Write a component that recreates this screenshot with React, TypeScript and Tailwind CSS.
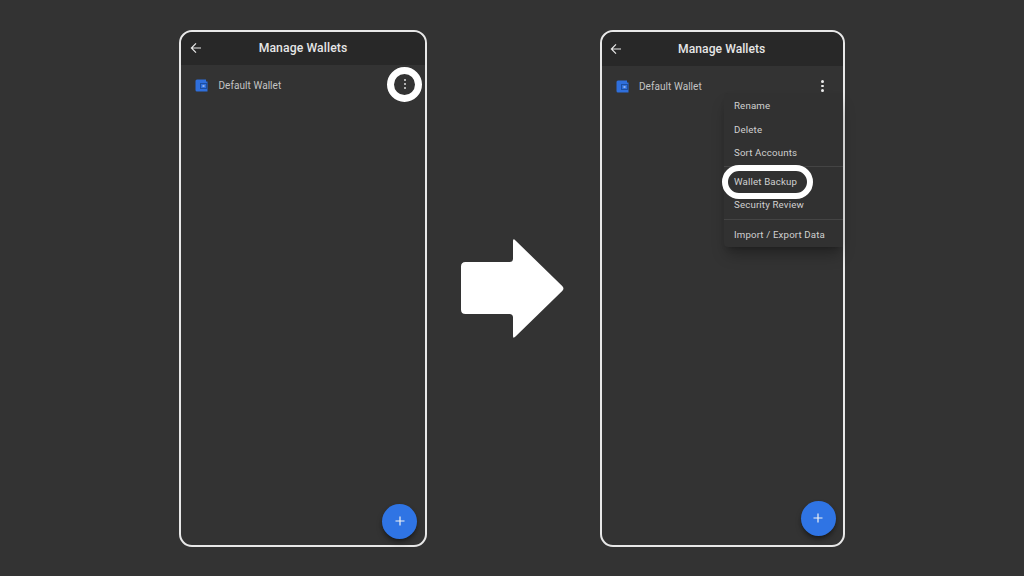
import React from "react";

const font = { fontFamily: "Roboto, sans-serif" };

const BackArrow = () => (
  <svg width="12" height="12" viewBox="0 0 12 12" fill="none" stroke="#e8e8e8" strokeWidth="1.2">
    <path d="M11 6H1.5M6 1.4 1.4 6 6 10.6" />
  </svg>
);

const WalletIcon = () => (
  <svg width="13" height="13" viewBox="0 0 13 13">
    <path d="M2 0.5H11V2.5H12.5V12.5H2A1.5 1.5 0 0 1 .5 11V2A1.5 1.5 0 0 1 2 .5Z" fill="#2f6fdc" />
    <rect x="5.5" y="4.5" width="6" height="5" fill="none" stroke="#1d4f9f" strokeWidth="1" />
    <rect x="7.5" y="6" width="2" height="2" fill="#8fb0e8" />
  </svg>
);

const Kebab = ({ small }: { small?: boolean }) => {
  const dot = small ? "w-[2px] h-[2px] rounded-full bg-[#dddddd]" : "w-[2.5px] h-[2.5px] rounded-full bg-[#ececec]";
  return (
    <div className="flex flex-col items-center gap-[2px]">
      <span className={dot} />
      <span className={dot} />
      <span className={dot} />
    </div>
  );
};

const Fab = ({ className }: { className: string }) => (
  <div className={`absolute w-[35px] h-[35px] rounded-full bg-[#2f74e4] flex items-center justify-center shadow-md shadow-black/40 ${className}`}>
    <svg width="10" height="10" viewBox="0 0 10 10" stroke="#f2f2f2" strokeWidth="1.2">
      <path d="M5 .5v9M.5 5h9" />
    </svg>
  </div>
);

const Header = ({ tall }: { tall?: boolean }) => (
  <div className={`relative flex items-center justify-center bg-[#282828] rounded-t-[12px] ${tall ? "h-[34px]" : "h-[33px]"}`}>
    <div className={`absolute top-0 bottom-0 flex items-center ${tall ? "left-[8.5px]" : "left-[9px]"}`}><BackArrow /></div>
    <span className={`font-medium text-[#e6e6e6] ${tall ? "text-[12.1px] tracking-[0.05px] pt-[2px] pr-[1px]" : "text-[12.2px] tracking-[0.1px]"}`}>Manage Wallets</span>
  </div>
);

const WalletRow = ({ children }: { children: React.ReactNode }) => (
  <div className="relative flex items-center h-[41px] pl-[14px]">
    <WalletIcon />
    <span className="ml-[10.5px] text-[10px] text-[#c4c4c4] tracking-[0.05px]">Default Wallet</span>
    {children}
  </div>
);

const MenuItem = ({ label }: { label: string }) => (
  <div className="h-[23.5px] flex items-center pl-[10px] text-[9.7px] text-[#d0d0d0] tracking-[0.15px]">{label}</div>
);

export default function App() {
  return (
    <div className="w-[1024px] h-[576px] bg-[#333333] flex items-center pl-[179px] overflow-hidden" style={font}>
      {/* left phone */}
      <div className="relative w-[248px] h-[517px] rounded-[13px] border-2 border-[#e8e8e8] bg-[#333333]">
        <Header />
        <WalletRow>
          <div className="absolute right-[3px] top-[2px] w-[35px] h-[35px] rounded-full border-[7px] border-white flex items-center justify-center">
            <Kebab small />
          </div>
        </WalletRow>
        <Fab className="right-[8px] bottom-[6px]" />
      </div>

      {/* arrow */}
      <svg className="ml-[33px] mr-[34.5px] shrink-0" width="105" height="101" viewBox="0 0 105 101" fill="white">
        <path d="M5.5 24H49.5Q53 24 53 20.5V3Q53 0 55.5 2.5L102.2 48Q104.7 50.5 102.2 53L55.5 98.5Q53 101 53 98V79.5Q53 76 49.5 76H5.5Q1 76 1 71.5V28.5Q1 24 5.5 24Z" />
      </svg>

      {/* right phone */}
      <div className="relative w-[245.5px] h-[517px] rounded-[13px] border-2 border-[#e8e8e8] bg-[#333333]">
        <Header tall />
        <WalletRow>
          <div className="absolute right-[19.5px] top-0 bottom-0 flex items-center"><Kebab /></div>
        </WalletRow>
        <div className="absolute right-0 top-[61px] w-[119px] bg-[#313131] shadow-lg shadow-black/30 rounded-l-sm pt-[2.5px]">
          <MenuItem label="Rename" />
          <MenuItem label="Delete" />
          <MenuItem label="Sort Accounts" />
          <div className="border-t border-[#444444] pt-[4px]">
            <MenuItem label="Wallet Backup" />
            <MenuItem label="Security Review" />
          </div>
          <div className="border-t border-[#444444] mt-[1.5px] pt-[3.5px]">
            <MenuItem label="Import / Export Data" />
          </div>
        </div>
        <div className="absolute left-[120.5px] top-[133px] w-[91px] h-[34px] rounded-full border-[6px] border-white" />
        <Fab className="right-[7.5px] bottom-[9px]" />
      </div>
    </div>
  );
}
